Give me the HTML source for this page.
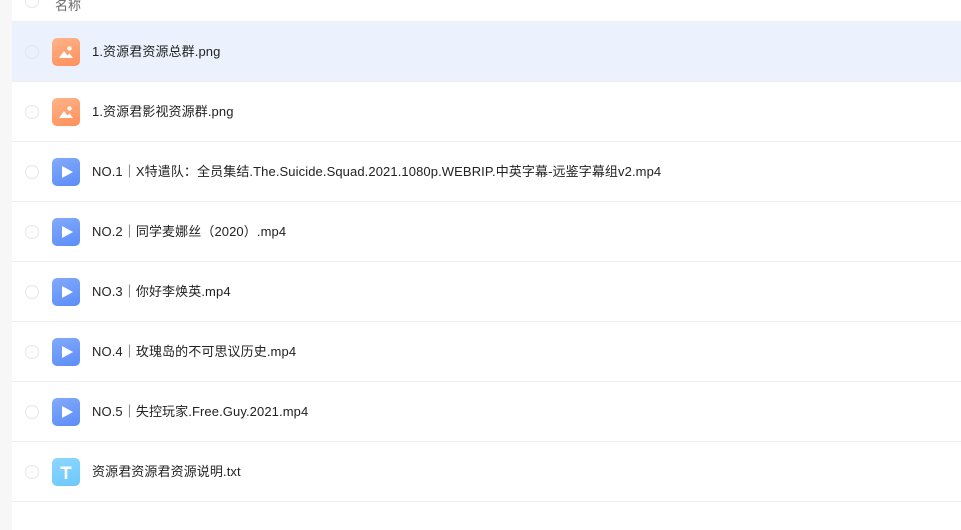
<!DOCTYPE html>
<html><head><meta charset="utf-8"><style>
*{margin:0;padding:0;box-sizing:border-box}
body{width:961px;height:530px;overflow:hidden;background:#fff;font-family:"Liberation Sans","Noto Sans CJK SC",sans-serif;position:relative}
.strip{position:absolute;left:0;top:0;width:12px;height:530px;background:#f7f7f8}
.hdr{position:absolute;left:12px;top:-18px;width:949px;height:40px;border-bottom:1px solid #eef0f3}
.hdr .cb{top:12px}
.hdr span{position:absolute;left:43px;top:13px;font-size:13px;color:#666}
.row{position:absolute;left:12px;width:949px;height:60px;border-bottom:1px solid #eceef1}
.row.sel{background:#ecf2fd}
.cb{position:absolute;left:13px;top:23px;width:14px;height:14px;border:1px solid #e6e6e6;border-radius:50%;background:#fff}
.row.sel .cb{background:transparent;border-color:#e2e6ee}
.ic{position:absolute;left:40px;top:16px;width:28px;height:28px;border-radius:5px}
.img{background:linear-gradient(160deg,#ffb48a,#ff8f5a)}
.vid{background:linear-gradient(160deg,#82aafc,#5b8df8)}
.txt{background:linear-gradient(160deg,#8cd7ff,#6cc8fc)}
.ic svg{position:absolute;left:0;top:0}
.nm{position:absolute;left:80px;top:22px;font-size:13px;color:#222;white-space:nowrap;line-height:16px;letter-spacing:0.1px}
</style></head><body>
<div class="strip"></div>
<div class="hdr"><div class="cb"></div><span>名称</span></div>

<div class="row sel" style="top:22px"><div class="cb"></div><div class="ic img"><svg width="28" height="28"><circle cx="17.5" cy="10.5" r="2.2" fill="#fff"/><path d="M7 20 L12 13 L15.5 17.5 L17.5 15.5 L21 20 Z" fill="#fff"/></svg></div><div class="nm">1.资源君资源总群.png</div></div>
<div class="row" style="top:82px"><div class="cb"></div><div class="ic img"><svg width="28" height="28"><circle cx="17.5" cy="10.5" r="2.2" fill="#fff"/><path d="M7 20 L12 13 L15.5 17.5 L17.5 15.5 L21 20 Z" fill="#fff"/></svg></div><div class="nm">1.资源君影视资源群.png</div></div>
<div class="row" style="top:142px"><div class="cb"></div><div class="ic vid"><svg width="28" height="28"><path d="M10 8 L21 14 L10 20 Z" fill="#fff"/></svg></div><div class="nm">NO.1｜X特遣队：全员集结.The.Suicide.Squad.2021.1080p.WEBRIP.中英字幕-远鉴字幕组v2.mp4</div></div>
<div class="row" style="top:202px"><div class="cb"></div><div class="ic vid"><svg width="28" height="28"><path d="M10 8 L21 14 L10 20 Z" fill="#fff"/></svg></div><div class="nm">NO.2｜同学麦娜丝（2020）.mp4</div></div>
<div class="row" style="top:262px"><div class="cb"></div><div class="ic vid"><svg width="28" height="28"><path d="M10 8 L21 14 L10 20 Z" fill="#fff"/></svg></div><div class="nm">NO.3｜你好李焕英.mp4</div></div>
<div class="row" style="top:322px"><div class="cb"></div><div class="ic vid"><svg width="28" height="28"><path d="M10 8 L21 14 L10 20 Z" fill="#fff"/></svg></div><div class="nm">NO.4｜玫瑰岛的不可思议历史.mp4</div></div>
<div class="row" style="top:382px"><div class="cb"></div><div class="ic vid"><svg width="28" height="28"><path d="M10 8 L21 14 L10 20 Z" fill="#fff"/></svg></div><div class="nm">NO.5｜失控玩家.Free.Guy.2021.mp4</div></div>
<div class="row" style="top:442px"><div class="cb"></div><div class="ic txt"><svg width="28" height="28"><path d="M8.5 8.5 H19.5 V11 H15.3 V21 H12.7 V11 H8.5 Z" fill="#fff"/></svg></div><div class="nm">资源君资源君资源说明.txt</div></div>
</body></html>
